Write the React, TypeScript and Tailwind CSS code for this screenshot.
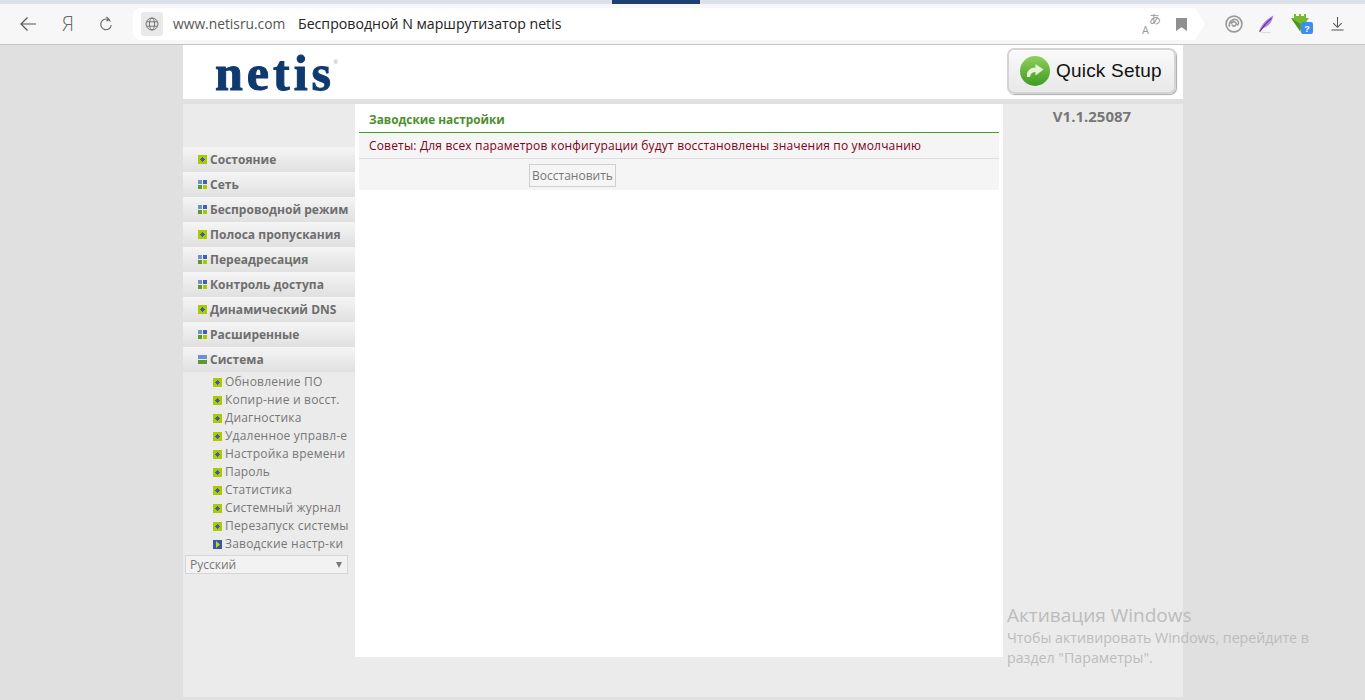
import React from "react";

const PlusIcon = () => (
  <svg width="9" height="9" viewBox="0 0 9 9" className="shrink-0 block">
    <rect width="9" height="9" fill="#abcb00" />
    <path d="M4 2h1v1h1v1h1v1H6v1H5v1H4V6H3V5H2V4h1V3h1z" fill="#3c5cb4" />
  </svg>
);
const GridIcon = () => (
  <svg width="9" height="9" viewBox="0 0 9 9" className="shrink-0 block">
    <rect width="4" height="4" fill="#6f8fcf" />
    <rect x="5" width="4" height="4" fill="#3d62b5" />
    <rect y="5" width="4" height="4" fill="#5a9a2e" />
    <rect x="5" y="5" width="4" height="4" fill="#a8c800" />
  </svg>
);
const MinusIcon = () => (
  <svg width="9" height="9" viewBox="0 0 9 9" className="shrink-0 block">
    <rect width="9" height="4" fill="#6f8fcf" />
    <rect y="5" width="9" height="4" fill="#5a9a2e" />
  </svg>
);
const ActiveIcon = () => (
  <svg width="9" height="9" viewBox="0 0 9 9" className="shrink-0 block">
    <rect width="9" height="9" fill="#3558ac" />
    <path d="M3 1l4 3.500L3 8z" fill="#c6d800" />
  </svg>
);

const menu: [string, React.ReactNode][] = [
  ["Состояние", <PlusIcon />],
  ["Сеть", <GridIcon />],
  ["Беспроводной режим", <GridIcon />],
  ["Полоса пропускания", <PlusIcon />],
  ["Переадресация", <GridIcon />],
  ["Контроль доступа", <GridIcon />],
  ["Динамический DNS", <PlusIcon />],
  ["Расширенные", <GridIcon />],
  ["Система", <MinusIcon />],
];
const sub = [
  "Обновление ПО",
  "Копир-ние и восст.",
  "Диагностика",
  "Удаленное управл-е",
  "Настройка времени",
  "Пароль",
  "Статистика",
  "Системный журнал",
  "Перезапуск системы",
  "Заводские настр-ки",
];

function Toolbar() {
  return (
    <div className="h-[45px] shrink-0 flex flex-col">
      <div className="h-[4px] bg-[#dce0e8] flex">
        <div className="w-[612px]" />
        <div className="w-[88px] bg-[#1d3f72]" />
      </div>
      <div className="h-[41px] border-b border-[#c4c4c4] bg-[#f7f7f7] flex items-center">
        <div className="w-[133px] flex items-center shrink-0 pl-[19px] h-full">
          <svg width="18" height="16" viewBox="0 0 18 16" fill="none" stroke="#555" strokeWidth="1.2">
            <path d="M17 8H2M8.500 1.500L2 8l6.500 6.500" />
          </svg>
          <span className="ml-[25px] text-[20px] font-light text-[#666] font-['Open_Sans',sans-serif] leading-none">Я</span>
          <svg className="ml-[25px]" width="14" height="16" viewBox="0 0 14 16" fill="none" stroke="#666" strokeWidth="1.1">
            <path d="M11.500 5.500A5.300 5.300 0 1 0 12.300 9M7.500 1l2.500 2.200L7.500 5.200" />
          </svg>
        </div>
        <div className="w-[1072px] h-[32px] bg-white rounded-l-[8px] flex items-center pl-[8px] [clip-path:polygon(0_0,calc(100%-10px)_0,100%_50%,calc(100%-10px)_100%,0_100%)] font-['Open_Sans',sans-serif]">
          <div className="w-[22px] h-[24px] rounded-[3px] bg-[#e9e9e9] flex items-center justify-center shrink-0">
            <svg width="14" height="14" viewBox="0 0 14 14" fill="none" stroke="#777" strokeWidth="1">
              <circle cx="7" cy="7" r="6" />
              <ellipse cx="7" cy="7" rx="2.600" ry="6" />
              <path d="M1.500 4.800h11M1.500 9.200h11" />
            </svg>
          </div>
          <span className="ml-[10px] w-[125px] shrink-0 text-[13.8px] text-[#555] whitespace-nowrap">www.netisru.com</span>
          <span className="text-[14.15px] text-[#222] whitespace-nowrap">Беспроводной N маршрутизатор netis</span>
          <div className="ml-auto flex items-center mr-[18px] gap-[16px]">
            <span className="relative w-[18px] h-[18px] text-[#999] block">
              <span className="absolute left-0 bottom-[-2px] text-[11px] leading-none">A</span>
              <span className="absolute right-[-1px] top-[-2px] text-[12px] leading-none font-['Noto_Sans_CJK_JP',sans-serif]">あ</span>
            </span>
            <svg width="11" height="13" viewBox="0 0 11 13">
              <path d="M0 0h11v13L5.500 9.300 0 13z" fill="#8f8f8f" />
            </svg>
          </div>
        </div>
        <div className="flex items-center pl-[20px]">
          <svg width="18" height="18" viewBox="0 0 20 20" fill="none" stroke="#9a9a9a" strokeWidth="1.800">
            <circle cx="10" cy="10" r="8.800" />
            <path d="M5 13C3.800 8 7.500 4.300 12 5c3.200.6 4 4.200 1.700 6.500M6.800 9.500c1-2 3.500-2.600 5-1.200 1.500 1.500.3 4-1.800 4-1.300 0-2-.8-2-1.800" />
          </svg>
          <svg className="ml-[15px]" width="17" height="20" viewBox="0 0 20 22">
            <path d="M1 21C3 12 10 5 18 1c-1 7-5 13-12 15-2 .6-3 2-5 5z" fill="#b48ae0" />
            <path d="M2 20C6 14 10 9 16 4" stroke="#6c2fb0" strokeWidth="1.400" fill="none" />
            <path d="M3 21h12" stroke="#ddd" strokeWidth="1.500" />
          </svg>
          <svg className="ml-[15px]" width="23" height="20" viewBox="0 0 23 20">
            <path d="M1 4h3V0h2v2h3V0h2v2h3V0h2v4h3L10.500 16z" fill="#74bb2c" />
            <path d="M1 4l9.500 6V18z" fill="#4f9420" />
            <rect x="11" y="8" width="12" height="12" rx="2" fill="#3f8cf0" />
            <text x="17" y="17.500" textAnchor="middle" fontSize="9" fontWeight="700" fill="#fff" fontFamily="Liberation Sans, sans-serif">?</text>
          </svg>
          <svg className="ml-[18px]" width="13" height="14" viewBox="0 0 14 15" fill="none" stroke="#555" strokeWidth="1.100">
            <path d="M7 0v11M2.500 6.500L7 11l4.500-4.500M0.500 14h13" />
          </svg>
        </div>
      </div>
    </div>
  );
}

function QuickSetup() {
  return (
    <div className="mr-[7px] mb-[2px] w-[169px] h-[46px] rounded-[7px] border-2 border-[#d4d4d4] shadow-[1px_1px_1px_#aaa] bg-gradient-to-b from-[#fafafa] to-[#e8e8e8] flex items-center pl-[11px] gap-[6px]">
      <svg width="30" height="30" viewBox="0 0 30 30" className="shrink-0">
        <defs>
          <linearGradient id="qs" x1="0" y1="0" x2="0" y2="1">
            <stop offset="0" stopColor="#8fd05a" />
            <stop offset="1" stopColor="#3f9a22" />
          </linearGradient>
        </defs>
        <circle cx="15" cy="15" r="15" fill="url(#qs)" />
        <path d="M7 21c-.8-5 2-9.500 8.500-9.500V8l8 5.500-8 6v-3.500c-3 0-5 1.500-5.500 5z" fill="#e6f4d8" />
      </svg>
      <span className="font-['Liberation_Sans',sans-serif] text-[19px] text-[#111] tracking-[0.2px] whitespace-nowrap">Quick Setup</span>
    </div>
  );
}

function Sidebar() {
  return (
    <div className="w-[172px] shrink-0 pt-[43px] font-['Open_Sans',sans-serif]">
      {menu.map(([label, icon]) => (
        <div key={label} className="h-[25px] pl-[15px] flex items-center gap-[3px] bg-gradient-to-b from-[#f5f5f5] to-[#e0e0e0] text-[12px] font-bold tracking-[0.03px] text-[#6e6e6e] whitespace-nowrap">
          {icon}
          <span>{label}</span>
        </div>
      ))}
      <div className="pt-[1px]">
        {sub.map((label, i) => (
          <div key={label} className="h-[18px] pl-[30px] flex items-center gap-[3px] text-[12px] text-[#777] tracking-[0.2px] whitespace-nowrap">
            {i === sub.length - 1 ? <ActiveIcon /> : <PlusIcon />}
            <span className="mb-[1px]">{label}</span>
          </div>
        ))}
      </div>
      <div className="ml-[2px] mt-[2px] w-[163px] h-[19px] border border-[#d6d6d6] bg-[#f2f2f2] flex items-center justify-between pl-[4px] pr-[5px] text-[12px] text-[#777]">
        <span>Русский</span>
        <span className="w-0 h-0 border-x-[3px] border-x-transparent border-t-[6px] border-t-[#777]" />
      </div>
    </div>
  );
}

function Main() {
  return (
    <div className="w-[648px] h-[553px] shrink-0 bg-white px-[4px] font-['Open_Sans',sans-serif]">
      <div className="h-[29px] border-b border-[#4c9a2a] pl-[10px] pt-[7px] text-[11.8px] font-bold text-[#4c8f2c] leading-[16px]">
        Заводские настройки
      </div>
      <div className="h-[26px] bg-[#f5f5f5] border-b border-[#dddddd] pl-[10px] flex items-center text-[12px] tracking-[0.17px] text-[#800020] whitespace-nowrap">
        Советы: Для всех параметров конфигурации будут восстановлены значения по умолчанию
      </div>
      <div className="h-[31px] bg-[#f5f5f5] pl-[170px] pt-[5px]">
        <div className="w-[87px] h-[23px] border border-[#cfcfcf] flex items-center justify-center text-[12px] text-[#777]">
          Восстановить
        </div>
      </div>
    </div>
  );
}

export default function App() {
  return (
    <div className="relative w-[1365px] h-[700px] overflow-hidden bg-[#e0e0e0] flex flex-col">
      <Toolbar />
      <div className="w-[1000px] ml-[183px] flex flex-col">
        <div className="h-[54px] bg-white flex items-center justify-between pl-[32px]">
          <span className="relative top-[1px] font-['Liberation_Serif',serif] font-bold text-[50px] leading-none text-[#0f3a6e] tracking-[4px] [-webkit-text-stroke:1px_#0f3a6e]">
            netis
            <span className="absolute right-[-3px] top-[11px] text-[6px] tracking-normal text-[#999] font-['Liberation_Sans',sans-serif] font-normal [-webkit-text-stroke:0]">®</span>
          </span>
          <QuickSetup />
        </div>
        <div className="mt-[5px] h-[593px] bg-[#ebebeb] flex">
          <Sidebar />
          <Main />
          <div className="flex-1 pr-[2px] text-center font-['Open_Sans',sans-serif] font-bold text-[15px] leading-[20px] text-[#777] pt-[2px]">
            V1.1.25087
          </div>
        </div>
      </div>
      <div className="absolute left-[1007px] top-[603px] font-['Open_Sans',sans-serif] text-[#bcbcbc]">
        <div className="text-[19px] leading-[24px]">Активация Windows</div>
        <div className="text-[14.2px] leading-[20px] mt-[1px] w-[320px]">Чтобы активировать Windows, перейдите в<br />раздел "Параметры".</div>
      </div>
    </div>
  );
}
